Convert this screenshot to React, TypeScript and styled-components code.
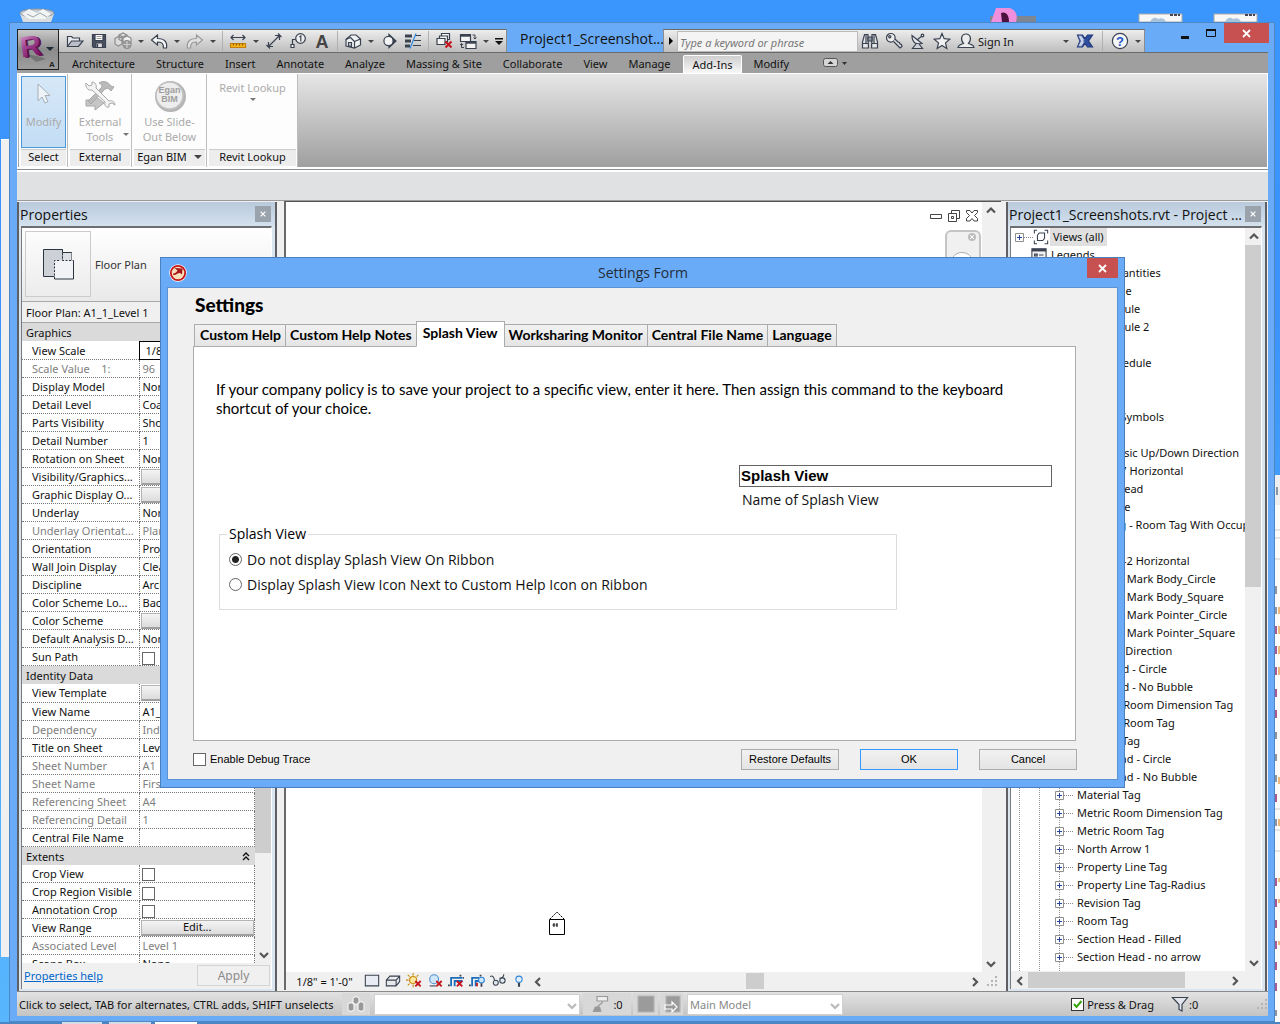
import React, { ReactNode } from "react";
import styled, { createGlobalStyle, css } from "styled-components";

const ui = '"Noto Sans", "Open Sans", sans-serif';
const lato = 'Lato, "Open Sans", sans-serif';
const arial = '"Liberation Sans", Arial, sans-serif';

const GlobalStyle = createGlobalStyle`
  * { box-sizing: border-box; }
  body { margin: 0; font-family: ${ui}; font-size: 11px; color: #111; overflow: hidden; }
  button, input, select { font: inherit; color: inherit; margin: 0; padding: 0; border: 0; background: none; border-radius: 0; }
  h1, h2, p { margin: 0; font-weight: normal; }
  svg { display: block; flex: none; }
`;

/* ---------- desktop ---------- */

const Desktop = styled.main`
  position: relative;
  height: 100vh;
  min-height: 700px;
  overflow: hidden;
  background: linear-gradient(180deg, #3a96fd 0%, #3b93fb 30%, #4fb0fd 80%, #58b6fd 100%);
`;

const DesktopItem = styled.div<{ $right?: boolean; $at: number }>`
  position: absolute;
  top: 8px;
  ${(p) => (p.$right ? `right: ${p.$at}px;` : `left: ${p.$at}px;`)}
`;

const BackLeft = styled.div`
  position: absolute;
  left: 1px;
  top: 139px;
  bottom: 67px;
  width: 14px;
  background: #f0f0f0;
  border-top: 1px solid #fff;
`;

const BackRight = styled.div`
  position: absolute;
  right: 0;
  top: 475px;
  bottom: 0;
  width: 6px;
  background: #fcfcfc;
`;

const Taskbar = styled.div`
  position: absolute;
  left: 0;
  right: 0;
  bottom: 0;
  height: 2px;
  background: linear-gradient(90deg, #4a86c4 62px, #d6dde6 62px 102px, #4a86c4 102px 109px, #d6dde6 109px 151px, #4a86c4 151px 155px, #fff 155px 197px, #4a86c4 197px);
`;

/* ---------- main window ---------- */

const MainWindow = styled.section`
  position: absolute;
  inset: 22px 5px 2px 9px;
  display: flex;
  flex-direction: column;
  padding: 0 6px 5px 7px;
  border: 1px solid #4f86c4;
  background: #6aabf7;
`;

const TitleBar = styled.header`
  display: flex;
  height: 29px;
  flex: none;
  padding-top: 6px;
  margin-right: -1px;
`;

const bar = css`
  display: flex;
  align-items: center;
  height: 23px;
  border-top: 1px solid #6c6c6c;
  background: linear-gradient(180deg, #ededed, #bdbdbd);
`;

const QuickBar = styled.div`
  ${bar}
  padding-left: 46px;
  border-right: 1px solid #8c8c8c;
  flex: none;
`;

const AppButton = styled.button`
  position: absolute;
  left: 7px;
  top: 6px;
  width: 42px;
  height: 41px;
  border: 1px solid #222;
  background: linear-gradient(180deg, #c9c9c9, #8b8b8b 50%, #9e9e9e);
`;

const IconButton = styled.button<{ $w?: number }>`
  display: flex;
  align-items: center;
  justify-content: center;
  width: ${(p) => p.$w ?? 24}px;
  height: 22px;
  flex: none;
`;

const Divider = styled.span<{ $gap?: number }>`
  width: 1px;
  height: 20px;
  margin: 0 ${(p) => p.$gap ?? 3}px;
  background: #b0b0b0;
  flex: none;
`;

const DocTitle = styled.h1`
  flex: 1;
  min-width: 0;
  padding-left: 13px;
  font-family: "Open Sans", sans-serif;
  font-size: 14px;
  line-height: 19px;
  white-space: nowrap;
`;

const InfoBar = styled.div`
  ${bar}
  border-left: 1px solid #8c8c8c;
  border-right: 1px solid #8c8c8c;
  flex: none;
`;

const SearchBox = styled.input`
  width: 181px;
  height: 21px;
  padding: 2px 2px 0;
  border: 1px solid #bbb;
  background: #f4f4f4;
  font-style: italic;
  &::placeholder { color: #777; opacity: 1; }
`;

const SignIn = styled.button`
  display: flex;
  align-items: center;
  justify-content: space-between;
  width: 95px;
  height: 22px;
  padding-right: 4px;
`;

const WinControls = styled.div`
  display: flex;
  margin-top: -6px;
  padding-left: 27px;
  flex: none;
`;

const WinButton = styled.button<{ $close?: boolean }>`
  display: flex;
  align-items: center;
  justify-content: center;
  width: ${(p) => (p.$close ? 45 : 26)}px;
  height: 20px;
  background: ${(p) => (p.$close ? "#c75050" : "transparent")};
`;

const RibbonTabs = styled.nav`
  display: flex;
  align-items: flex-end;
  flex: none;
  height: 21px;
  padding-left: 45px;
  border-top: 1px solid #6b6b6b;
  background: #9f9f9f;
`;

const RibbonTab = styled.button<{ $active?: boolean }>`
  height: 18px;
  padding: 0 11px 0 10px;
  line-height: 16px;
  ${(p) =>
    p.$active &&
    `padding: 0 9px; margin: 0 1px; border: 1px solid #fff; border-bottom: 0; border-radius: 2px 2px 0 0; background: linear-gradient(180deg, #cfcfcf, #f8f8f8); line-height: 14px;`}
`;

const Ribbon = styled.div`
  display: flex;
  flex: none;
  height: 94px;
  padding-left: 1px;
  border-top: 1px solid #fff;
  border-left: 1px solid #fff;
  border-right: 1px solid #fff;
  background: linear-gradient(180deg, #e6e6e6, #9f9f9f);
`;

const RibbonPanel = styled.section<{ $w: number }>`
  display: flex;
  flex-direction: column;
  width: ${(p) => p.$w}px;
  padding: 2px 1px 1px 2px;
  border-right: 1px solid #bdbdbd;
  background: #fdfdfd;
`;

const RibbonButton = styled.button<{ $selected?: boolean }>`
  display: flex;
  flex-direction: column;
  align-items: center;
  flex: 1;
  color: #ababab;
  line-height: 15px;
  padding-top: 3px;
  border: 1px solid ${(p) => (p.$selected ? "#4a98da" : "transparent")};
  background: ${(p) => (p.$selected ? "linear-gradient(180deg,#d6e8f8,#c3ddf4)" : "transparent")};
`;

const RibbonLabel = styled.span`
  position: relative;
  display: block;
  margin-top: 2px;
`;

const LabelCaret = styled.span`
  position: absolute;
  right: -8px;
  bottom: 8px;
`;

const LookupCaret = styled.span`
  margin-top: 3px;
`;

const PanelTitle = styled.h2`
  display: flex;
  align-items: center;
  justify-content: center;
  gap: 7px;
  height: 17px;
  margin-top: 1px;
  padding-bottom: 2px;
  border-top: 1px solid #ccc;
  background: #ededed;
  color: #111;
  font-size: 11px;
  line-height: 14px;
  white-space: nowrap;
`;

const OptionsBar = styled.div`
  flex: none;
  height: 34px;
  border-top: 2px solid #fff;
  border-bottom: 1px solid #9a9a9a;
  background: linear-gradient(180deg, #8f8f8f 1px, #fff 1px 3px, #e0e1e3 3px);
`;

const Workspace = styled.div`
  display: flex;
  flex: 1;
  min-height: 0;
  background: #f0f0f0;
`;

/* ---------- dock panels ---------- */

const Dock = styled.aside<{ $w: number; $left?: boolean }>`
  display: flex;
  flex-direction: column;
  flex: none;
  width: ${(p) => p.$w}px;
  margin-top: 1px;
  margin-left: ${(p) => (p.$left ? 0 : 5)}px;
  margin-right: ${(p) => (p.$left ? 0 : 1)}px;
  padding: 0 3px 2px 2px;
  border-left: 2px solid #5e6063;
  border-right: 2px solid #5e6063;
  background: #dbe5f0;
`;

const DockTitle = styled.header`
  display: flex;
  align-items: center;
  flex: none;
  height: 24px;
  margin: 0 -3px 0 -2px;
  padding: 0 4px 0 1px;
  background: linear-gradient(180deg, #b9cadc, #d4e1ee);
  h2 { flex: 1; padding-top: 1px; font-family: "Open Sans", sans-serif; font-size: 14px; line-height: 23px; white-space: nowrap; }
`;

const CloseSmall = styled.button`
  display: flex;
  align-items: center;
  justify-content: center;
  width: 16px;
  height: 16px;
  margin-bottom: 1px;
  background: #9aa3ac;
  flex: none;
`;

const DockBody = styled.div`
  display: flex;
  flex-direction: column;
  flex: 1;
  min-height: 0;
  border-top: 2px solid #6e6e70;
  border-left: 1px solid #7a7a7c;
  border-right: 1px solid #fff;
  background: #f0f0f0;
`;

const TypeSelector = styled.button`
  display: flex;
  align-items: center;
  gap: 4px;
  flex: none;
  height: 73px;
  padding: 0 0 1px 3px;
  background: linear-gradient(180deg, #fff, #e9e9e9);
  text-align: left;
  color: #333;
`;

const TypeThumb = styled.span`
  display: flex;
  align-items: center;
  justify-content: center;
  width: 66px;
  height: 66px;
  border: 1px solid #cbcbcb;
  background: linear-gradient(180deg, #fcfcfc, #ececec);
`;

const InstanceRow = styled.div`
  flex: none;
  height: 22px;
  padding-left: 4px;
  border-top: 1px solid #a8a8a8;
  border-bottom: 1px solid #a8a8a8;
  line-height: 21px;
  white-space: nowrap;
`;

const Split = styled.div<{ $inset?: boolean }>`
  display: flex;
  flex: 1;
  min-height: 0;
  padding-right: ${(p) => (p.$inset ? 3 : 0)}px;
`;

const Clip = styled.div`
  flex: 1;
  min-width: 0;
  overflow: hidden;
  background: #fff;
`;

const PropTable = styled.table`
  width: 100%;
  table-layout: fixed;
  border-collapse: collapse;
  td, th { height: 18px; padding: 0; font-weight: normal; text-align: left; line-height: 17px; white-space: nowrap; overflow: hidden; }
`;

const GroupHead = styled.th`
  background: #dadada;
  & > div { display: flex; align-items: center; justify-content: space-between; height: 18px; padding: 1px 5px 0 4px; }
`;

const PropName = styled.th<{ $dim?: boolean }>`
  border-right: 1px dotted #777;
  border-bottom: 1px dotted #777;
  color: ${(p) => (p.$dim ? "#808080" : "#111")};
  && { padding-left: 10px; white-space: pre; }
`;

const PropValue = styled.td<{ $dim?: boolean; $focus?: boolean }>`
  border-bottom: 1px dotted #777;
  border-right: 1px dotted #777;
  color: ${(p) => (p.$dim ? "#808080" : "#111")};
  && { padding-left: 3px; ${(p) => p.$focus && "border: 1px solid #000; padding-left: 6px;"} }
`;

const NameCol = styled.col`
  width: 117px;
`;

const CellButton = styled.button`
  display: block;
  width: calc(100% + 2px);
  height: 16px;
  margin-left: -2px;
  border: 1px solid #b4b4b4;
  border-bottom: 2px solid #a0a0a0;
  background: linear-gradient(180deg, #f4f4f4, #dcdcdc);
  line-height: 12px;
`;

const Tick = styled.input<{ $green?: boolean }>`
  appearance: none;
  display: block;
  width: 13px;
  height: 13px;
  flex: none;
  border: 1px solid #666;
  background: #fff;
  ${(p) => p.$green && "border-color: #333;"}
`;

const CellTick = styled(Tick)`
  margin: 3px 0 0 -1px;
`;

const PropFooter = styled.footer`
  display: flex;
  align-items: center;
  justify-content: space-between;
  flex: none;
  height: 26px;
  padding: 0 1px 1px 2px;
  a { color: #0066cc; }
`;

const ApplyButton = styled.button`
  width: 73px;
  height: 21px;
  border: 1px solid #d4d4d4;
  color: #8a8a8a;
  font-size: 12px;
`;

/* ---------- scrollbars ---------- */

const ScrollTrack = styled.div<{ $v?: boolean }>`
  display: flex;
  flex-direction: ${(p) => (p.$v ? "column" : "row")};
  flex: ${(p) => (p.$v ? "none" : "1")};
  ${(p) => (p.$v ? "width" : "height")}: 16px;
  background: #f0f0f0;
`;

const ScrollArrow = styled.button`
  display: flex;
  align-items: center;
  justify-content: center;
  width: 17px;
  height: 17px;
  flex: none;
`;

const ScrollPart = styled.div<{ $grow: number; $thumb?: boolean }>`
  flex: ${(p) => p.$grow} 1 0px;
  background: ${(p) => (p.$thumb ? "#cdcdcd" : "transparent")};
`;

const Chevron = ({ dir }: { dir: "up" | "down" | "left" | "right" }) => {
  const d = { up: "M1 6.5 5 2.5 9 6.5", down: "M1 3 5 7 9 3", left: "M7 1 3 5 7 9", right: "M3 1 7 5 3 9" }[dir];
  return (
    <svg width="10" height="10" viewBox="0 0 10 10">
      <path d={d} fill="none" stroke="#555" strokeWidth="2.2" />
    </svg>
  );
};

const Scrollbar = ({ vertical, parts }: { vertical?: boolean; parts: [number, number, number] }) => (
  <ScrollTrack $v={vertical}>
    <ScrollArrow aria-label="Scroll back"><Chevron dir={vertical ? "up" : "left"} /></ScrollArrow>
    <ScrollPart $grow={parts[0]} />
    <ScrollPart $grow={parts[1]} $thumb />
    <ScrollPart $grow={parts[2]} />
    <ScrollArrow aria-label="Scroll forward"><Chevron dir={vertical ? "down" : "right"} /></ScrollArrow>
  </ScrollTrack>
);

/* ---------- drawing view ---------- */

const ViewFrame = styled.section`
  display: flex;
  flex-direction: column;
  flex: 1;
  min-width: 0;
  margin: 0 0 1px 7px;
  border-left: 2px solid #6a6a6a;
  border-top: 1px solid #555;
  background: #f0f0f0;
`;

const Canvas = styled.div`
  position: relative;
  flex: 1;
  background: #fff;
`;

const MdiControls = styled.div`
  position: absolute;
  top: 6px;
  right: 1px;
  display: flex;
  button { width: 18px; height: 16px; display: flex; align-items: center; justify-content: center; }
`;

const NavWidget = styled.div`
  position: absolute;
  top: 28px;
  right: 1px;
  width: 36px;
  height: 60px;
  border: 2px solid #c4c4c4;
  border-radius: 6px;
  background: #f0f0f0;
`;

const Marker = styled.div`
  position: absolute;
  left: 263px;
  top: 708px;
`;

const ViewBar = styled.div`
  display: flex;
  align-items: center;
  flex: none;
  height: 18px;
`;

const ViewScaleButton = styled.button`
  width: 75px;
  padding-left: 2px;
  line-height: 17px;
`;

const Corner = styled.span`
  display: flex;
  align-items: center;
  justify-content: center;
  width: 18px;
  flex: none;
`;

/* ---------- browser tree ---------- */

const TreeClip = styled(Clip)`
  background-color: #fff;
`;

const TreeRow = styled.div<{ $indent: number }>`
  display: flex;
  align-items: center;
  height: 18px;
  padding-left: ${(p) => p.$indent}px;
  line-height: 17px;
  white-space: nowrap;
  background-image: ${(p) =>
    p.$indent > 20
      ? "repeating-linear-gradient(180deg,#999 0 1px,#fff 1px 2px),repeating-linear-gradient(180deg,#999 0 1px,#fff 1px 2px),repeating-linear-gradient(180deg,#999 0 1px,#fff 1px 2px)"
      : "none"};
  background-size: 1px 18px;
  background-position: 8px 0, 28px 0, 48px 0;
  background-repeat: no-repeat;
`;

const TreeLabel = styled.span<{ $on?: boolean }>`
  margin-left: 1px;
  padding: 0 3px;
  line-height: 18px;
  background: ${(p) => (p.$on ? "#e0e0e0" : "transparent")};
`;

const Dots = styled.span`
  width: 9px;
  border-top: 1px dotted #888;
`;

/* ---------- status bar ---------- */

const StatusBar = styled.footer`
  display: flex;
  align-items: center;
  flex: none;
  height: 25px;
  border-top: 1px solid #8a8a8a;
  background: linear-gradient(180deg, #e2e2e2, #c4c4c4);
  white-space: nowrap;
`;

const StatusText = styled.p`
  width: 325px;
  padding-left: 2px;
  flex: none;
`;

const StatusBtn = styled.button<{ $w: number }>`
  display: flex;
  align-items: center;
  justify-content: center;
  gap: 4px;
  width: ${(p) => p.$w}px;
  height: 22px;
  margin: 0 2px 0 0;
  background: #d8d8d8;
  flex: none;
`;

const Picker = styled.label<{ $w: number }>`
  position: relative;
  width: ${(p) => p.$w}px;
  height: 21px;
  margin: 0 3px 0 2px;
  flex: none;
  select { appearance: none; width: 100%; height: 100%; padding-left: 2px; border: 1px solid #d0d0d0; background: #fff; color: #888; }
  svg { position: absolute; right: 3px; top: 7px; opacity: 0.4; }
`;

const PressDrag = styled.label`
  display: flex;
  align-items: center;
  gap: 3px;
  margin-left: auto;
`;

const CheckWrap = styled.span`
  position: relative;
  svg { position: absolute; left: 1px; top: 1px; pointer-events: none; }
`;

const FilterBtn = styled.button`
  display: flex;
  align-items: center;
  width: 81px;
  margin-left: 17px;
  margin-right: 4px;
`;

/* ---------- dialog ---------- */

const Dialog = styled.section`
  position: absolute;
  left: 160px;
  right: 155px;
  top: 257px;
  min-width: 700px;
  padding: 0 6px 7px;
  border: 1px solid #4a80bd;
  background: #6aabf7;
`;

const DialogTitle = styled.header`
  display: flex;
  align-items: flex-start;
  height: 29px;
  padding-left: 2px;
  h2 { flex: 1; padding-left: 12px; font-family: "Open Sans", sans-serif; font-size: 14px; line-height: 29px; text-align: center; color: #222c38; }
  svg { margin-top: 6px; }
`;

const DialogClose = styled(WinButton)`
  width: 31px;
  svg { margin-top: 0; }
`;

const DialogBody = styled.div`
  padding: 5px 41px 9px 25px;
  border: 1px solid #5a92d4;
  background: #f0f0f0;
`;

const Heading = styled.h2`
  padding-left: 2px;
  font: 900 19px/24px ${lato};
  color: #000;
`;

const Tabs = styled.div`
  display: flex;
  align-items: flex-end;
  height: 26px;
  margin: 4px 0 -1px 1px;
  position: relative;
`;

const Tab = styled.button<{ $active?: boolean }>`
  height: ${(p) => (p.$active ? 26 : 23)}px;
  padding: ${(p) => (p.$active ? "0 6px 2px" : "0 4px 1px")};
  border: 1px solid #acacac;
  background: ${(p) => (p.$active ? "#fff" : "linear-gradient(180deg,#f1f1f1,#e5e5e5)")};
  border-bottom-color: ${(p) => (p.$active ? "#fff" : "#acacac")};
  font: 700 14px/20px ${lato};
  color: #000;
  & + & { margin-left: -1px; }
  &:first-child { padding-left: 5px; }
`;

const Page = styled.div`
  padding: 33px 23px 130px 22px;
  border: 1px solid #acacac;
  background: #fff;
`;

const Intro = styled.p`
  max-width: 810px;
  font: 15px/19px ${lato};
  color: #000;
`;

const NameField = styled.div`
  display: flex;
  flex-direction: column;
  width: 313px;
  margin: 47px 0 0 auto;
  label { padding-left: 3px; font-family: "Open Sans", sans-serif; font-size: 14px; line-height: 26px; color: #111; }
  input { height: 22px; padding: 0 1px 2px; border: 1px solid #646464; background: #fff; font: 700 15px/18px ${arial}; color: #000; }
`;

const Group = styled.fieldset`
  display: flex;
  flex-direction: column;
  width: 678px;
  max-width: 100%;
  margin: 11px 0 0 3px;
  padding: 3px 9px 12px;
  border: 1px solid #dcdcdc;
  font-family: "Open Sans", sans-serif;
  font-size: 14px;
  legend { margin-left: -2px; padding: 0 2px; line-height: 20px; color: #000; }
  label { display: flex; align-items: center; gap: 5px; height: 25px; color: #111; }
`;

const Radio = styled.input`
  appearance: none;
  width: 13px;
  height: 13px;
  border: 1px solid #666;
  border-radius: 50%;
  background: #fff;
  &:checked { background: radial-gradient(circle, #222 0 3px, #fff 4px); }
`;

const DialogFooter = styled.footer`
  display: flex;
  align-items: center;
  gap: 21px;
  height: 21px;
  margin: 8px -1px 0 0;
  font: 12px/19px ${arial};
  label { display: flex; align-items: center; gap: 4px; margin-right: auto; font-size: 11px; color: #000; }
`;

const PushButton = styled.button<{ $default?: boolean }>`
  width: 98px;
  height: 21px;
  border: 1px solid ${(p) => (p.$default ? "#3399ff" : "#acacac")};
  background: linear-gradient(180deg, #f1f1f1, #e4e4e4);
  font: 11px/19px ${arial};
  color: #000;
`;

/* ---------- icons ---------- */

const Ic = ({ children, s = 18 }: { children: ReactNode; s?: number }) => (
  <svg width={s} height={s} viewBox="0 0 18 18" fill="none" stroke="#3a4250" strokeWidth="1.2">
    {children}
  </svg>
);

const Caret = ({ color = "#444", w = 6 }: { color?: string; w?: number }) => (
  <svg width={w} height={Math.ceil(w / 2)} viewBox="0 0 6 3"><path d="M0 0h6L3 3z" fill={color} /></svg>
);

const CrossWhite = ({ s = 9 }: { s?: number }) => (
  <svg width={s} height={s} viewBox="0 0 9 9"><path d="M1 1l7 7M8 1l-7 7" stroke="#fff" strokeWidth="1.8" /></svg>
);

const RedX = ({ x, y }: { x: number; y: number }) => (
  <path d={`M${x} ${y}l6 6m0-6l-6 6`} stroke="#c4161c" strokeWidth="2.1" />
);

const OpenIcon = () => <Ic><path d="M1.500 14.500v-10h4l1.500 1.500h6.500v3" fill="#e8eaee" /><path d="M1.500 14.500l4-5.500h11.500l-4.500 5.500z" fill="#b9bec8" /></Ic>;
const SaveIcon = () => <Ic><path d="M2.500 2.500h13v13h-12l-1-1z" fill="#4a5262" /><path d="M5 2.500h8v6h-8z" fill="#fff" /><path d="M6.500 4.500h5M6.500 6.500h5" stroke="#999" /><path d="M6 11h6.500v4.500h-6.500z" fill="#ddd" /><path d="M7.500 12v3" /></Ic>;
const SyncIcon = () => <Ic><g stroke="#8d8d8d"><path d="M1 6.500l3.500-2 3.500 1.500v6l-3.500 2-3.500-2zM5 3l4-2 4 2v4.500l-4 2-4-2z" fill="#dcdcdc" /><path d="M5 3l4 2 4-2M9 5v4" /><path d="M9 6l4-2 4 2v5l-4 2-4-2z" fill="#eee" /><circle cx="13" cy="12.500" r="4" fill="#9b9b9b" /><path d="M9.500 12.500h7M13 9v7" stroke="#ccc" /></g></Ic>;
const UndoIcon = () => <Ic><path d="M7.500 3l-6 5 6 5v-3c4 0 6 1 6 6h3c1-6-2-9.500-9-9.500z" fill="#f4f5f7" /></Ic>;
const RedoIcon = () => <Ic><path d="M10.500 3l6 5-6 5v-3c-4 0-6 1-6 6h-3c-1-6 2-9.500 9-9.500z" fill="#e2e2e2" stroke="#9a9a9a" /></Ic>;
const MeasureIcon = () => <Ic><path d="M2 5.500h14M4.500 3l-2.500 2.500 2.500 2.500M13.500 3l2.500 2.500-2.500 2.500" /><path d="M1.500 11.500h15v4h-15z" fill="#f7b21b" stroke="#c2810a" /><path d="M4.500 11.500v2M7.500 11.500v2M10.500 11.500v2M13.500 11.500v2" stroke="#8a5a00" /></Ic>;
const DimIcon = () => <Ic><path d="M4 14l10-10M3.500 10v4.500h4.500M10 3.500h4.500v4.500M1.500 13l3.500 3.500M13 1.500l3.500 3.500" /></Ic>;
const TagIcon = () => <Ic><circle cx="11.500" cy="6.500" r="4.800" fill="#eee" /><path d="M10.500 5l1.300-1v5.500M6.500 7.500h-3v5" /><path d="M2 12.500h3v3h-3z" fill="#fff" /></Ic>;
const TextIcon = () => <svg width="18" height="18" viewBox="0 0 18 18"><text x="9" y="16" textAnchor="middle" fontFamily="Liberation Sans" fontWeight="700" fontSize="18" fill="#444">A</text></svg>;
const HouseIcon = () => <Ic><path d="M2 7.500l5-4.500h5l4.500 4v6l-6 3-8.500-2z" fill="#f1f2f4" /><path d="M2 7.500l4.500-2 4 4v6.500M10.500 9.500l6-2.500" /><path d="M4.500 10.500h3v4l-3-.7z" fill="#c3c8d0" /></Ic>;
const SectionIcon = () => <Ic><path d="M9 2.500l7 6.500-7 6.500z" fill="#3a4250" /><circle cx="8.500" cy="9" r="4.600" fill="#f4f4f4" /></Ic>;
const ThinIcon = () => <Ic><path d="M1 4h7M1 9h6M1 14h5" strokeWidth="3" /><path d="M11 3.500h6M10 8.500h7M9 13.500h8" strokeWidth="1" /><path d="M12 1.500l-6 15" stroke="#2f8be6" /></Ic>;
const CloseWinIcon = () => <Ic><path d="M6.500 1.500h8v6h-8z" fill="#f4f4f4" /><path d="M4.500 4h8v6h-8z" fill="#f4f4f4" /><path d="M2 6.500h8v6h-8z" fill="#f4f4f4" /><RedX x={10.500} y={9.500} /></Ic>;
const SwitchIcon = () => <Ic><path d="M1.500 2.500h10v7h-10z" fill="#f4f4f4" /><path d="M1.500 3.500h10" strokeWidth="2.400" /><path d="M7 9.500h10v7h-10z" fill="#f4f4f4" /><path d="M7 10.500h10" strokeWidth="2.400" /><path d="M13.500 3h2.500v4M14.500 5.500l1.500 1.500 1.500-1.500M5 15.500h-2.500v-4M1 13l1.500-1.500 1.500 1.500" strokeWidth="1" /></Ic>;
const Binoculars = () => <Ic><path d="M3.500 2.500h3.500v4l.5 9.500h-6v-6zM14.500 2.500h-3.500v4l-.5 9.500h6v-6z" fill="#e4e6ea" /><path d="M7 5h4v4h-4z" fill="#8f96a3" /><path d="M1.500 11.500h5.800M10.700 11.500h5.800M5 3v8M13 3v8" /></Ic>;
const KeyIcon = () => <Ic><circle cx="5.800" cy="5.800" r="4.300" fill="#ececec" /><circle cx="4.800" cy="4.800" r="1.100" /><path d="M8.500 9.500l6.500 6.500 2-1.500-.5-2-1.500-.5-.5-1.500-1.500-.5-3-3" fill="#d5d8dd" /></Ic>;
const DishIcon = () => <Ic><path d="M3 3.500c0 7 4 9.500 10 8z" fill="#e6e8ec" /><path d="M8 8l5-4M7 12l-3.500 4.500h10l-3.500-4.500" fill="#cfd3d9" /><circle cx="13.500" cy="3.500" r="1.300" /></Ic>;
const StarIcon = () => <Ic><path d="M9 1.500l2.200 5.200 5.600.5-4.300 3.700 1.300 5.500-4.800-2.900-4.800 2.900 1.300-5.500-4.300-3.700 5.600-.5z" fill="#f1f1f1" /></Ic>;
const UserIcon = () => <Ic><path d="M1 15.500c0-2.500 3-3 5.500-4-3.500-4-2-9.500 2.500-9.500s6 5.500 2.500 9.500c2.500 1 5.500 1.500 5.500 4z" fill="#ececec" /></Ic>;
const ExchangeIcon = () => <Ic><path d="M1.500 3h5l2.500 3.500 2.500-3.500h5l-4 6 4 6h-5l-2.500-3.500-2.500 3.500h-5l2.500-6z" fill="#2d4f9e" stroke="#22387c" /><path d="M2 3.500h3.500l3 4.500-1 1 1 1-3 4.500h-3.500l2.500-5.500z" fill="#c6d2ea" stroke="#3d5590" strokeWidth=".8" /></Ic>;
const HelpIcon = () => <svg width="18" height="18" viewBox="0 0 18 18"><circle cx="9" cy="9" r="7.600" fill="#f5f6f8" stroke="#3a4250" strokeWidth="1.200" /><text x="9" y="13.500" textAnchor="middle" fontFamily="Liberation Sans" fontWeight="700" fontSize="13" fill="#2352c4">?</text></svg>;

const RevitLogo = () => (
  <svg width="40" height="39" viewBox="0 0 40 39">
    <defs>
      <linearGradient id="rv" x1="0" y1="0" x2="0.400" y2="1"><stop offset="0" stopColor="#e8b5dc" /><stop offset="0.500" stopColor="#a04593" /><stop offset="1" stopColor="#7a0e62" /></linearGradient>
    </defs>
    <path d="M9 24l14 3 5 2-10 3z" fill="#444" opacity="0.400" />
    <g fontFamily="Liberation Sans" fontWeight="700" fontSize="29" transform="rotate(-8 14 16)">
      <text x="4" y="27" fill="#57104a">R</text>
      <text x="2" y="26" fill="url(#rv)">R</text>
    </g>
    <path d="M28 17h8l-4 4z" fill="#222c38" />
    <text x="31" y="37" fontFamily="Liberation Sans" fontWeight="700" fontSize="8" fill="#222">A</text>
  </svg>
);

const CursorIcon = () => <svg width="32" height="32" viewBox="0 0 32 32"><path d="M10 4v17l4-4 3 6 3-1.500-3-6h5z" fill="#eef3f8" stroke="#a5adb5" /></svg>;
const ToolsIcon = () => (
  <svg width="32" height="32" viewBox="0 0 32 32" stroke="#a8a8a8">
    <path d="M2 20h9v-4l9 7-9 7v-4h-9z" fill="#c6c6c6" />
    <path d="M15 3c5-3 9-1 12 3l3 1-3 4-3-3-3 1-14 15-3-3 14-14c0-2-1-3-3-4z" fill="#bababa" />
    <path d="M2 3l3 3 3-1 0-3c3 0 5 3 4 6l13 13c3-1 6 1 6 4l-3-2-3 1v3c-3 1-5-2-4-5l-13-12c-4 1-7-3-6-7z" fill="#f4f4f4" />
  </svg>
);
const EganIcon = () => (
  <svg width="32" height="32" viewBox="0 0 32 32">
    <circle cx="16.500" cy="16.500" r="14" fill="none" stroke="#b4b4b4" strokeWidth="3" />
    <circle cx="15.500" cy="15.500" r="13.500" fill="#ededed" stroke="#c2c2c2" strokeWidth="1.500" />
    <g fontFamily="Liberation Sans" fontWeight="700" fontSize="9" fill="#9e9e9e" textAnchor="middle"><text x="15.500" y="13">Egan</text><text x="15.500" y="22">BIM</text></g>
  </svg>
);
const PlanIcon = () => (
  <svg width="32" height="32" viewBox="0 0 32 32" stroke="#2c3440">
    <path d="M1.500 1.500h19v27h-19z" fill="#cdd0d5" /><path d="M20.500 4.500h9v9" fill="none" /><path d="M20.500 4.500h9v9h-9z" fill="#dcdfe3" stroke="none" /><path d="M12.500 12.500h19v19h-19z" fill="#f1f3f6" stroke="none" />
    <path d="M12.500 31v-18.500h6M20.500 1.500v11h11" fill="none" strokeDasharray="2 1.500" /><path d="M29.500 4.500h-9M31.500 12.500v18.500h-19" fill="none" />
  </svg>
);

const PlusBox = () => (
  <svg width="9" height="9" viewBox="0 0 9 9"><path d="M.5.500h8v8h-8z" fill="#fff" stroke="#8f8f8f" /><path d="M2 4.500h5M4.500 2v5" stroke="#27479b" /></svg>
);

const ViewsGlyph = () => <Ic s={16}><path d="M1.500 5v-3.500h3M13 1.500h3.500v3.500M16.500 13v3.500h-3.500M4.500 16.500h-3v-3.500" /><path d="M5 7l2-2.500h6v6l-2 2.500h-6z" fill="#fff" /></Ic>;
const LegendGlyph = () => <Ic s={16}><path d="M1 2h16v14h-16z" fill="#f2f2f2" /><path d="M1 3.500h16" strokeWidth="3" /><path d="M4 8h3v2h-3zM4 12.500h3M9 9h5M9 12.500h5" /></Ic>;

const Grip = () => (
  <svg width="12" height="12" viewBox="0 0 12 12" fill="#b4b4b4"><path d="M9 1h2v2h-2zM5 5h2v2h-2zM9 5h2v2h-2zM1 9h2v2h-2zM5 9h2v2h-2zM9 9h2v2h-2z" /></svg>
);

const viewIcons: ReactNode[] = [
  <path key="a" d="M1.500 2.500h15v12h-15z" fill="#e9ebf4" />,
  <path key="b" d="M1.500 8l4-4.500h11v6l-4 5h-11zM1.500 8h11l4-4.500M12.500 8v6.500" fill="#e6e9ec" />,
  <g key="c"><circle cx="8" cy="8" r="4" fill="#ffe9a0" stroke="#c98b10" /><path d="M8 0v3M8 13v3M0 8h3M2 2l2 2M14 2l-2 2M2 14l2-2" stroke="#c98b10" /><RedX x={10.500} y={9} /></g>,
  <g key="d"><circle cx="8" cy="7" r="5" fill="#cfe6fb" stroke="#4d8fce" /><path d="M3 14.500h7" stroke="#7d8794" strokeWidth="2" /><RedX x={10.500} y={9} /></g>,
  <g key="e"><path d="M3.500 15v-9.500h13M7.500 15v-6h9" stroke="#1c6dbd" strokeWidth="2" /><path d="M0 14h2M13 3h2M17 5.500h1" strokeWidth="2" /><RedX x={10} y={9} /></g>,
  <g key="f"><path d="M3.500 15v-9.500h8M7.500 15v-6h4" stroke="#1c6dbd" strokeWidth="2" /><path d="M0 14h2M12 3h2" strokeWidth="2" /><path d="M9 11v4" stroke="#c4161c" strokeWidth="2" /><circle cx="14" cy="8" r="3.300" fill="#cfe6fb" stroke="#2a83d8" /><path d="M14 11.500v4" strokeWidth="2" /></g>,
  <g key="g"><path d="M0 4c3-2 5 1 5 5M10.500 6c2 0 5-1 5-4.500" /><circle cx="6.500" cy="11" r="2.800" fill="#dfe9f2" /><circle cx="14" cy="8.500" r="3" fill="#dfe9f2" /></g>,
  <g key="h"><circle cx="9" cy="7" r="3.500" fill="#dff0ff" stroke="#2a83d8" /><path d="M9 11v4.500" strokeWidth="2.400" /></g>,
];

/* ---------- data ---------- */

type Prop = { n: string; v?: string; dim?: boolean; kind?: "head" | "btn" | "tick" | "focus"; mark?: boolean };

const props: Prop[] = [
  { n: "Graphics", kind: "head" },
  { n: "View Scale", v: "1/8\" = 1'-0\"", kind: "focus" },
  { n: "Scale Value    1:", v: "96", dim: true },
  { n: "Display Model", v: "Normal" },
  { n: "Detail Level", v: "Coarse" },
  { n: "Parts Visibility", v: "Show Original" },
  { n: "Detail Number", v: "1" },
  { n: "Rotation on Sheet", v: "None" },
  { n: "Visibility/Graphics...", v: "Edit...", kind: "btn" },
  { n: "Graphic Display O...", v: "Edit...", kind: "btn" },
  { n: "Underlay", v: "None" },
  { n: "Underlay Orientat...", v: "Plan", dim: true },
  { n: "Orientation", v: "Project North" },
  { n: "Wall Join Display", v: "Clean all wall joins" },
  { n: "Discipline", v: "Architectural" },
  { n: "Color Scheme Lo...", v: "Background" },
  { n: "Color Scheme", v: "<none>", kind: "btn" },
  { n: "Default Analysis D...", v: "None" },
  { n: "Sun Path", kind: "tick" },
  { n: "Identity Data", kind: "head" },
  { n: "View Template", v: "<None>", kind: "btn" },
  { n: "View Name", v: "A1_1_Level 1" },
  { n: "Dependency", v: "Independent", dim: true },
  { n: "Title on Sheet", v: "Level 1" },
  { n: "Sheet Number", v: "A1", dim: true },
  { n: "Sheet Name", v: "First Floor", dim: true },
  { n: "Referencing Sheet", v: "A4", dim: true },
  { n: "Referencing Detail", v: "1", dim: true },
  { n: "Central File Name", v: "" },
  { n: "Extents", kind: "head", mark: true },
  { n: "Crop View", kind: "tick" },
  { n: "Crop Region Visible", kind: "tick" },
  { n: "Annotation Crop", kind: "tick" },
  { n: "View Range", v: "Edit...", kind: "btn" },
  { n: "Associated Level", v: "Level 1", dim: true },
  { n: "Scope Box", v: "None" },
];

const schedules = ["Wall Schedule", "Room Schedule", "Room Schedule 2", "Sheet List", "Window Schedule", "Sheets (all)", "Families", "Annotation Symbols"];

const annotations = [
  "Area Tag", "Arrow Basic Up/Down Direction", "Bearing 7 Horizontal", "Callout Head", "Centerline",
  "Double Tag - Room Tag With Occupancy", "Door Tag", "Elevate 1-2 Horizontal", "Elevation Mark Body_Circle",
  "Elevation Mark Body_Square", "Elevation Mark Pointer_Circle", "Elevation Mark Pointer_Square",
  "Graphics Direction", "Grid Head - Circle", "Grid Head - No Bubble", "Imperial Room Dimension Tag",
  "Imperial Room Tag", "Keynote Tag", "Level Head - Circle", "Level Head - No Bubble", "Material Tag",
  "Metric Room Dimension Tag", "Metric Room Tag", "North Arrow 1", "Property Line Tag",
  "Property Line Tag-Radius", "Revision Tag", "Room Tag", "Section Head - Filled", "Section Head - no arrow",
  "Section Head - Open",
];

const ribbonTabs = ["Architecture", "Structure", "Insert", "Annotate", "Analyze", "Massing & Site", "Collaborate", "View", "Manage", "Add-Ins", "Modify"];
const dialogTabs = ["Custom Help", "Custom Help Notes", "Splash View", "Worksharing Monitor", "Central File Name", "Language"];

const PropRow = ({ p }: { p: Prop }) => {
  if (p.kind === "head")
    return (
      <tr>
        <GroupHead colSpan={2}>
          <div>
            {p.n}
            {p.mark && <svg width="8" height="9" viewBox="0 0 8 9"><path d="M1 4l3-3 3 3M1 8l3-3 3 3" fill="none" stroke="#111" strokeWidth="1.400" /></svg>}
          </div>
        </GroupHead>
      </tr>
    );
  return (
    <tr>
      <PropName scope="row" $dim={p.dim}>{p.n}</PropName>
      <PropValue $dim={p.dim} $focus={p.kind === "focus"}>
        {p.kind === "btn" ? <CellButton>{p.v}</CellButton> : p.kind === "tick" ? <CellTick type="checkbox" aria-label={p.n} /> : p.v}
      </PropValue>
    </tr>
  );
};

const DocIcon = () => (
  <svg width="46" height="14" viewBox="0 0 46 14"><path d="M1 6h43v8h-43z" fill="#f7f7f7" stroke="#aaa" /><path d="M32 7h10" stroke="#445" strokeDasharray="3 1" strokeWidth="2" /><path d="M12 14c2-5 6-5 8-3 4-2 7 0 8 3z" fill="#a9c4da" /></svg>
);

export default function App() {
  return (
    <Desktop>
      <GlobalStyle />
      <DesktopItem $at={18}>
        <svg width="38" height="14" viewBox="0 0 38 14"><path d="M2 6l3 8h28l3-8z" fill="#d9dde0" /><ellipse cx="19" cy="5" rx="17" ry="4" fill="#c5cbd0" stroke="#8f979e" /><path d="M4 6l7-5 8 4 6-4 8 5-6 5h-16z" fill="#f2f4f5" /><path d="M9 6l6 3 7-4 7 4" stroke="#9aa5ad" fill="none" /></svg>
      </DesktopItem>
      <DesktopItem $right $at={244}>
        <svg width="48" height="14" viewBox="0 0 48 14"><path d="M2 8h46v6h-46z" fill="#7e8791" /><path d="M8 0h14c6 2 8 8 6 14h-25z" fill="#f08fdc" /><path d="M13 5c5-2 8 2 8 9h-7z" fill="#4b1240" /></svg>
      </DesktopItem>
      <DesktopItem $right $at={96}><DocIcon /></DesktopItem>
      <DesktopItem $right $at={21}><DocIcon /></DesktopItem>
      <BackLeft />
      <BackRight>
        <svg width="6" height="549" viewBox="0 0 6 549">
          <path d="M0 0h6v30h-6z" fill="#efefef" />
          <path d="M1 55h5M1 63h5M1 84h5M1 334h5M1 355h5M1 376h5" stroke="#ccc" />
          <g stroke="#a85a94" strokeWidth="2"><path d="M2 151v8M2 171v8M2 192v8M2 214v8M2 235v8M2 319v8M2 403v8M2 424v8M2 445v8M2 466v8M2 487v8M2 508v8" /></g>
          <g stroke="#edb87c" strokeWidth="2"><path d="M5 132v7M5 151v8M5 171v8M5 192v8M5 302v7M5 344v7M5 403v4M5 424v4M5 466v4" /></g>
          <g stroke="#8a96a6" strokeWidth="2"><path d="M2 111v8M3 12v8M2 132v7M2 257v7M2 279v7M2 300v7M2 344v7M2 535v6" /></g>
        </svg>
      </BackRight>
      <Taskbar />

      <MainWindow>
        <TitleBar>
          <QuickBar>
            <IconButton aria-label="Open"><OpenIcon /></IconButton>
            <IconButton aria-label="Save"><SaveIcon /></IconButton>
            <IconButton aria-label="Synchronize"><SyncIcon /></IconButton>
            <IconButton $w={12} aria-label="Synchronize options"><Caret /></IconButton>
            <IconButton aria-label="Undo"><UndoIcon /></IconButton>
            <IconButton $w={12} aria-label="Undo list"><Caret /></IconButton>
            <IconButton aria-label="Redo"><RedoIcon /></IconButton>
            <IconButton $w={12} aria-label="Redo list"><Caret /></IconButton>
            <Divider />
            <IconButton aria-label="Measure"><MeasureIcon /></IconButton>
            <IconButton $w={12} aria-label="Measure options"><Caret /></IconButton>
            <IconButton aria-label="Aligned dimension"><DimIcon /></IconButton>
            <IconButton aria-label="Tag"><TagIcon /></IconButton>
            <IconButton aria-label="Text"><TextIcon /></IconButton>
            <Divider />
            <IconButton aria-label="3D view"><HouseIcon /></IconButton>
            <IconButton $w={12} aria-label="3D view options"><Caret /></IconButton>
            <IconButton aria-label="Section"><SectionIcon /></IconButton>
            <IconButton aria-label="Thin lines"><ThinIcon /></IconButton>
            <Divider />
            <IconButton aria-label="Close hidden windows"><CloseWinIcon /></IconButton>
            <IconButton aria-label="Switch windows"><SwitchIcon /></IconButton>
            <IconButton $w={12} aria-label="Window list"><Caret /></IconButton>
            <IconButton $w={14} aria-label="Customize toolbar">
              <svg width="8" height="7" viewBox="0 0 8 7"><path d="M0 0h8v1.500h-8zM0 3h8l-4 4z" fill="#111" /></svg>
            </IconButton>
          </QuickBar>
          <DocTitle>Project1_Screenshot...</DocTitle>
          <InfoBar>
            <IconButton $w={13} aria-label="Expand search"><svg width="4" height="8" viewBox="0 0 4 8"><path d="M0 0l4 4-4 4z" fill="#000" /></svg></IconButton>
            <SearchBox aria-label="Search" placeholder="Type a keyword or phrase" />
            <IconButton aria-label="Search help"><Binoculars /></IconButton>
            <IconButton aria-label="Subscription"><KeyIcon /></IconButton>
            <IconButton aria-label="Communication"><DishIcon /></IconButton>
            <IconButton aria-label="Favorites"><StarIcon /></IconButton>
            <IconButton aria-label="Account"><UserIcon /></IconButton>
            <SignIn>Sign In<Caret /></SignIn>
            <IconButton aria-label="Exchange apps"><ExchangeIcon /></IconButton>
            <Divider $gap={5} />
            <IconButton aria-label="Help"><HelpIcon /></IconButton>
            <IconButton $w={12} aria-label="Help options"><Caret /></IconButton>
          </InfoBar>
          <WinControls>
            <WinButton aria-label="Minimize"><svg width="10" height="14" viewBox="0 0 10 14"><path d="M1 10h8v3h-8z" fill="#111" /></svg></WinButton>
            <WinButton aria-label="Maximize"><svg width="11" height="9" viewBox="0 0 11 9"><path d="M.5 1.500h9v6h-9z" fill="none" stroke="#111" /><path d="M0 1h10" stroke="#111" strokeWidth="2" /></svg></WinButton>
            <WinButton $close aria-label="Close"><CrossWhite /></WinButton>
          </WinControls>
        </TitleBar>

        <RibbonTabs>
          {ribbonTabs.map((t) => <RibbonTab key={t} $active={t === "Add-Ins"}>{t}</RibbonTab>)}
          <IconButton $w={72} aria-label="Minimize ribbon">
            <svg width="26" height="9" viewBox="0 0 26 9"><rect x=".5" y=".5" width="14" height="8" rx="2" fill="#d6d6d6" stroke="#555" /><path d="M4.500 6h6l-3-3zM19 4h5l-2.500 3z" fill="#333" /></svg>
          </IconButton>
        </RibbonTabs>
        <AppButton aria-label="Application menu"><RevitLogo /></AppButton>

        <Ribbon>
          <RibbonPanel $w={49}>
            <RibbonButton $selected><CursorIcon /><RibbonLabel>Modify</RibbonLabel></RibbonButton>
            <PanelTitle>Select</PanelTitle>
          </RibbonPanel>
          <RibbonPanel $w={64}>
            <RibbonButton><ToolsIcon /><RibbonLabel>External<br />Tools<LabelCaret><Caret color="#777" /></LabelCaret></RibbonLabel></RibbonButton>
            <PanelTitle>External</PanelTitle>
          </RibbonPanel>
          <RibbonPanel $w={75}>
            <RibbonButton><EganIcon /><RibbonLabel>Use Slide-<br />Out Below</RibbonLabel></RibbonButton>
            <PanelTitle>Egan BIM <Caret w={8} /></PanelTitle>
          </RibbonPanel>
          <RibbonPanel $w={91}>
            <RibbonButton>Revit Lookup<LookupCaret><Caret color="#777" /></LookupCaret></RibbonButton>
            <PanelTitle>Revit Lookup</PanelTitle>
          </RibbonPanel>
        </Ribbon>
        <OptionsBar />

        <Workspace>
          <Dock $w={260} $left>
            <DockTitle><h2>Properties</h2><CloseSmall aria-label="Close properties"><CrossWhite s={6} /></CloseSmall></DockTitle>
            <DockBody>
              <TypeSelector><TypeThumb><PlanIcon /></TypeThumb>Floor Plan</TypeSelector>
              <InstanceRow>Floor Plan: A1_1_Level 1</InstanceRow>
              <Split>
                <Clip>
                  <PropTable>
                    <colgroup><NameCol /><col /></colgroup>
                    <tbody>{props.map((p) => <PropRow key={p.n} p={p} />)}</tbody>
                  </PropTable>
                </Clip>
                <Scrollbar vertical parts={[0, 513, 93]} />
              </Split>
              <PropFooter><a href="#help">Properties help</a><ApplyButton disabled>Apply</ApplyButton></PropFooter>
            </DockBody>
          </Dock>

          <ViewFrame>
            <Split $inset>
              <Canvas>
                <MdiControls>
                  <button aria-label="Minimize view"><svg width="12" height="5" viewBox="0 0 12 5"><path d="M.5.500h11v4h-11z" fill="#fff" stroke="#444" /></svg></button>
                  <button aria-label="Restore view"><svg width="12" height="12" viewBox="0 0 12 12" fill="#fff" stroke="#444"><path d="M3.500.500h8v8h-8z" /><path d="M.5 3.500h8v8h-8z" /><path d="M3.500 6.500h2v2h-2z" /></svg></button>
                  <button aria-label="Close view"><svg width="12" height="12" viewBox="0 0 12 12"><path d="M.5.500h3.500l2 2.500 2-2.500h3.500v2l-3 3 3 3v2.500h-3.500l-2-2.500-2 2.500h-3.500v-2.500l3-3-3-3z" fill="#fff" stroke="#444" /></svg></button>
                </MdiControls>
                <NavWidget>
                  <svg width="32" height="50" viewBox="0 0 32 50"><circle cx="25" cy="5" r="4" fill="#bdbdbd" /><path d="M23 3l4 4M27 3l-4 4" stroke="#fff" /><path d="M5 28c2-10 18-10 20 0z" fill="#fff" stroke="#aaa" /></svg>
                </NavWidget>
                <Marker>
                  <svg width="17" height="26" viewBox="0 0 17 26"><path d="M.5 9.500h15v15h-15z" fill="#fff" stroke="#000" /><path d="M1 9l7-7 7 7" fill="none" stroke="#000" strokeDasharray="2 1" /><path d="M5 13v4M8 13v4M3.500 15h2M6.500 15h2" stroke="#000" /></svg>
                </Marker>
              </Canvas>
              <Scrollbar vertical parts={[1, 0, 0]} />
            </Split>
            <ViewBar>
              <ViewScaleButton>1/8" = 1'-0"</ViewScaleButton>
              {viewIcons.map((g, i) => <IconButton key={i} $w={21} aria-label={`View control ${i + 1}`}><Ic s={16}>{g}</Ic></IconButton>)}
              <Scrollbar parts={[200, 17, 202]} />
              <Corner><Grip /></Corner>
            </ViewBar>
          </ViewFrame>

          <Dock $w={261}>
            <DockTitle><h2>Project1_Screenshots.rvt - Project ...</h2><CloseSmall aria-label="Close browser"><CrossWhite s={6} /></CloseSmall></DockTitle>
            <DockBody>
              <Split>
                <TreeClip>
                  <TreeRow $indent={4}><PlusBox /><Dots /><ViewsGlyph /><TreeLabel $on>Views (all)</TreeLabel></TreeRow>
                  <TreeRow $indent={20}><LegendGlyph /><TreeLabel>Legends</TreeLabel></TreeRow>
                  <TreeRow $indent={20}><LegendGlyph /><TreeLabel>Schedules/Quantities</TreeLabel></TreeRow>
                  {schedules.map((s) => <TreeRow key={s} $indent={45}><TreeLabel>{s}</TreeLabel></TreeRow>)}
                  {annotations.map((s) => <TreeRow key={s} $indent={44}><PlusBox /><Dots /><TreeLabel>{s}</TreeLabel></TreeRow>)}
                </TreeClip>
                <Scrollbar vertical parts={[0, 344, 369]} />
              </Split>
              <ViewBar>
                <Scrollbar parts={[0, 159, 42]} />
                <Corner />
              </ViewBar>
            </DockBody>
          </Dock>
        </Workspace>

        <StatusBar>
          <StatusText>Click to select, TAB for alternates, CTRL adds, SHIFT unselects</StatusText>
          <StatusBtn $w={28} aria-label="Worksets"><Ic><path d="M1 9l3-1.500 3 1.500v6l-3 1.500-3-1.500zM6 3l3-1.500 3 1.500v5l-3 1.500-3-1.500zM11 8l3-1.500 3 1.500v7l-3 1.500-3-1.500z" fill="#999" stroke="#f2f2f2" /></Ic></StatusBtn>
          <Picker $w={206}><select aria-label="Active workset"><option></option></select><Chevron dir="down" /></Picker>
          <StatusBtn $w={48}><Ic><path d="M6 1.500h10.500v4.500h-10.500z" stroke="#999" fill="#eee" /><path d="M11 6v2l-4 3v2" stroke="#999" /><path d="M4 11.500h5l1.500 5.500h-9z" fill="#999" stroke="none" /></Ic>:0</StatusBtn>
          <StatusBtn $w={25} aria-label="Design options"><Ic><path d="M1 1h16v16h-16z" fill="#9b9b9b" stroke="#b5b5b5" /></Ic></StatusBtn>
          <StatusBtn $w={23} aria-label="Add to set"><Ic><path d="M3 1h14v16h-14z" fill="#9b9b9b" stroke="#b5b5b5" /><path d="M2 10h7v-3l5 5-5 5v-3h-7z" fill="#999" stroke="#fff" /></Ic></StatusBtn>
          <Picker $w={156}><select aria-label="Design option"><option>Main Model</option></select><Chevron dir="down" /></Picker>
          <PressDrag>
            <CheckWrap><Tick type="checkbox" $green defaultChecked /><svg width="11" height="11" viewBox="0 0 11 11"><path d="M2 5l2.500 3 5-6" fill="none" stroke="#3aa510" strokeWidth="2" /></svg></CheckWrap>
            Press &amp; Drag
          </PressDrag>
          <FilterBtn><Ic><path d="M1.500 2.500h15l-5.500 7v6.500l-3-1.500v-5z" fill="#e2e6ec" /></Ic>:0</FilterBtn>
          <Grip />
        </StatusBar>
      </MainWindow>

      <Dialog role="dialog" aria-labelledby="dlg-title">
        <DialogTitle>
          <svg width="18" height="18" viewBox="0 0 18 18"><circle cx="9" cy="9" r="8.700" fill="#fff" /><circle cx="9" cy="9" r="7.200" fill="#f7dfba" stroke="#c5161a" strokeWidth="1.800" /><path d="M5.500 4l8 .5-.5 6-2-1.500c-3 0-4 2.500-6.500 2l-.5-1.500c2 0 3.500-1 4.500-3z" fill="#a8161a" /></svg>
          <h2 id="dlg-title">Settings Form</h2>
          <DialogClose $close aria-label="Close dialog"><CrossWhite /></DialogClose>
        </DialogTitle>
        <DialogBody>
          <Heading>Settings</Heading>
          <Tabs role="tablist">
            {dialogTabs.map((t) => <Tab key={t} role="tab" aria-selected={t === "Splash View"} $active={t === "Splash View"}>{t}</Tab>)}
          </Tabs>
          <Page role="tabpanel">
            <Intro>If your company policy is to save your project to a specific view, enter it here. Then assign this command to the keyboard shortcut of your choice.</Intro>
            <NameField>
              <input id="splash-name" defaultValue="Splash View" />
              <label htmlFor="splash-name">Name of Splash View</label>
            </NameField>
            <Group>
              <legend>Splash View</legend>
              <label><Radio type="radio" name="splash" defaultChecked />Do not display Splash View On Ribbon</label>
              <label><Radio type="radio" name="splash" />Display Splash View Icon Next to Custom Help Icon on Ribbon</label>
            </Group>
          </Page>
          <DialogFooter>
            <label><Tick type="checkbox" />Enable Debug Trace</label>
            <PushButton>Restore Defaults</PushButton>
            <PushButton $default>OK</PushButton>
            <PushButton>Cancel</PushButton>
          </DialogFooter>
        </DialogBody>
      </Dialog>
    </Desktop>
  );
}
